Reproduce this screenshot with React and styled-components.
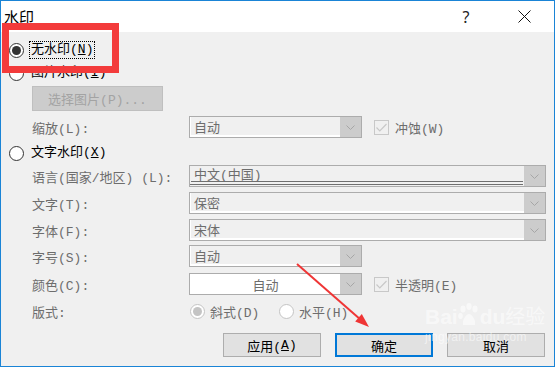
import React from "react";
import styled, { createGlobalStyle } from "styled-components";

const GlobalStyle = createGlobalStyle`
  html, body { margin: 0; padding: 0; background: #ffffff; }
  body { font-family: "Liberation Mono", "Noto Sans CJK SC", monospace; }
  * { box-sizing: border-box; }
`;

const Window = styled.div`
  position: relative;
  width: 555px;
  height: 367px;
  border: 1px solid #1a84d6;
  background: #f0f0f0;
  display: flex;
  flex-direction: column;
  overflow: hidden;
`;

const TitleBar = styled.div`
  height: 31px;
  flex: none;
  background: #ffffff;
  display: flex;
  align-items: center;
  padding: 0 23px 0 3px;
  font-family: "Noto Sans CJK SC", sans-serif;
  font-size: 15px;
  color: #000;
`;

const TitleText = styled.span`
  flex: 1;
  line-height: 1;
`;

const TitleGlyph = styled.span`
  width: 14px;
  display: flex;
  justify-content: center;
  font-family: "Noto Sans", sans-serif;
  font-size: 16px;
  color: #222;
  margin-left: ${(p) => p.$ml || 0}px;
`;

const Body = styled.div`
  flex: 1;
  display: flex;
  flex-direction: column;
  padding: 0 9px 0 8px;
  font-size: 13px;
`;

const RadioRow = styled.div`
  display: flex;
  align-items: center;
  height: 20px;
  margin-top: ${(p) => p.$mt}px;
`;

const Radio = styled.span`
  position: relative;
  flex: none;
  width: 15px;
  height: 15px;
  border-radius: 50%;
  border: 1px solid ${(p) => (p.$disabled ? "#c4c4c4" : "#333")};
  background: #fff;
  margin-left: ${(p) => p.$ml || 0}px;
  &::after {
    content: "";
    display: ${(p) => (p.$checked ? "block" : "none")};
    position: absolute;
    inset: 2px;
    border-radius: 50%;
    background: ${(p) => (p.$disabled ? "#c4c4c4" : "#333")};
  }
`;

const RadioLabel = styled.span`
  margin-left: 5px;
  padding: 0 1px;
  height: 18px;
  line-height: 16px;
  border: 1px dotted ${(p) => (p.$focused ? "#000" : "transparent")};
  color: ${(p) => (p.$muted ? "#6d6d6d" : "#000")};
  white-space: nowrap;
`;

const Key = styled.span`
  text-decoration: underline;
`;

const PictureButton = styled.div`
  margin: 3px 0 0 23px;
  width: 131px;
  height: 25px;
  background: #cccccc;
  border: 1px solid #bfbfbf;
  color: #a3a3a3;
  display: flex;
  align-items: center;
  justify-content: center;
  white-space: nowrap;
`;

const FieldRow = styled.div`
  display: grid;
  grid-template-columns: 157px auto auto;
  justify-content: start;
  align-items: center;
  height: ${(p) => p.$h || 22}px;
  margin-top: ${(p) => p.$mt}px;
  padding-left: 23px;
`;

const Label = styled.span`
  color: #6d6d6d;
  white-space: nowrap;
`;

const Combo = styled.div`
  width: ${(p) => p.$w}px;
  height: 22px;
  border: 1px solid #acacac;
  display: flex;
  background: ${(p) => (p.$white ? "#ffffff" : "#f0f0f0")};
`;

const ComboText = styled.div`
  flex: 1;
  display: flex;
  align-items: center;
  justify-content: ${(p) => (p.$center ? "center" : "flex-start")};
  padding-left: ${(p) => (p.$center ? 0 : 3)}px;
  color: #6d6d6d;
  white-space: nowrap;
  border-left: 1px solid ${(p) => (p.$underline || p.$white ? "transparent" : "#fff")};
  border-bottom: ${(p) =>
    p.$underline
      ? "4px double #6f6f6f"
      : p.$white
      ? "none"
      : "2px solid #fff"};
  margin-bottom: ${(p) => (p.$underline ? 1 : 0)}px;
  margin-right: ${(p) => (p.$underline ? 1 : 0)}px;
`;

const ComboArrow = styled.div`
  width: 21px;
  flex: none;
  background: #cccccc;
  display: flex;
  align-items: center;
  justify-content: center;
`;

const CheckItem = styled.div`
  display: flex;
  align-items: center;
  margin-left: 12px;
`;

const CheckBox = styled.span`
  width: 15px;
  height: 15px;
  border: 1px solid #c8c8c8;
  display: flex;
  align-items: center;
  justify-content: center;
`;

const CheckLabel = styled.span`
  margin-left: 6px;
  color: #6d6d6d;
  white-space: nowrap;
`;

const Options = styled.div`
  display: flex;
  align-items: center;
`;

const OptionLabel = styled.span`
  margin-left: 5px;
  color: #6d6d6d;
  white-space: nowrap;
  width: ${(p) => p.$w || "auto"};
`;

const ButtonRow = styled.div`
  display: flex;
  justify-content: flex-end;
  gap: 14px;
  margin-top: 12px;
`;

const Button = styled.div`
  width: 98px;
  height: 24px;
  background: #e1e1e1;
  border: ${(p) => (p.$default ? "2px solid #0078d7" : "1px solid #adadad")};
  display: flex;
  align-items: center;
  justify-content: center;
  color: #000;
  white-space: nowrap;
`;

const Highlight = styled.div`
  position: absolute;
  left: 1px;
  top: 22px;
  width: 117px;
  height: 50px;
  border: 7px solid #f33b3b;
  pointer-events: none;
`;

const Overlay = styled.svg`
  position: absolute;
  left: 0;
  top: 0;
  pointer-events: none;
`;

const Watermark = styled.div`
  position: absolute;
  left: 424px;
  top: 302px;
  display: flex;
  flex-direction: column;
  align-items: flex-start;
  color: rgba(255, 255, 255, 0.55);
  pointer-events: none;
  font-family: "Liberation Sans", "Noto Sans CJK SC", sans-serif;
`;

const WmBrand = styled.div`
  display: flex;
  align-items: flex-end;
  font-size: 21px;
  font-weight: bold;
  line-height: 1;
`;

const WmUrl = styled.div`
  font-size: 12px;
  margin-top: 3px;
  letter-spacing: 0.3px;
`;

const Chevron = () => (
  <svg width="9" height="5" viewBox="0 0 9 5">
    <polyline points="0.5,0.5 4.5,4.5 8.5,0.5" fill="none" stroke="#a6a6a6" strokeWidth="1" />
  </svg>
);

const Check = () => (
  <svg width="11" height="9" viewBox="0 0 11 9">
    <polyline points="0.5,4.5 3.8,7.8 10.5,1" fill="none" stroke="#c8c8c8" strokeWidth="1.2" />
  </svg>
);

const ComboBox = ({ w, text, underline, white, center }) => (
  <Combo $w={w} $white={white}>
    <ComboText $underline={underline} $white={white} $center={center}>
      {text}
    </ComboText>
    <ComboArrow>
      <Chevron />
    </ComboArrow>
  </Combo>
);

export default function App() {
  return (
    <>
      <GlobalStyle />
      <Window>
        <TitleBar>
          <TitleText>水印</TitleText>
          <TitleGlyph>?</TitleGlyph>
          <TitleGlyph $ml={44}>
            <svg width="13" height="13" viewBox="0 0 13 13">
              <path d="M0.5 0.5 L12.5 12.5 M12.5 0.5 L0.5 12.5" stroke="#111" strokeWidth="1" />
            </svg>
          </TitleGlyph>
        </TitleBar>
        <Body>
          <RadioRow $mt={8}>
            <Radio $checked />
            <RadioLabel $focused>
              无水印(<Key>N</Key>)
            </RadioLabel>
          </RadioRow>
          <RadioRow $mt={3}>
            <Radio />
            <RadioLabel>
              图片水印(<Key>I</Key>)
            </RadioLabel>
          </RadioRow>
          <PictureButton>选择图片(P)...</PictureButton>
          <FieldRow $mt={5}>
            <Label>缩放(L):</Label>
            <ComboBox w={173} text="自动" />
            <CheckItem>
              <CheckBox>
                <Check />
              </CheckBox>
              <CheckLabel>冲蚀(W)</CheckLabel>
            </CheckItem>
          </FieldRow>
          <RadioRow $mt={5}>
            <Radio />
            <RadioLabel>
              文字水印(<Key>X</Key>)
            </RadioLabel>
          </RadioRow>
          <FieldRow $mt={2}>
            <Label>语言(国家/地区) (L):</Label>
            <ComboBox w={357} text="中文(中国)" underline />
          </FieldRow>
          <FieldRow $mt={5}>
            <Label>文字(T):</Label>
            <ComboBox w={357} text="保密" />
          </FieldRow>
          <FieldRow $mt={5}>
            <Label>字体(F):</Label>
            <ComboBox w={357} text="宋体" />
          </FieldRow>
          <FieldRow $mt={4}>
            <Label>字号(S):</Label>
            <ComboBox w={173} text="自动" />
          </FieldRow>
          <FieldRow $mt={6}>
            <Label>颜色(C):</Label>
            <ComboBox w={173} text="自动" white center />
            <CheckItem>
              <CheckBox>
                <Check />
              </CheckBox>
              <CheckLabel>半透明(E)</CheckLabel>
            </CheckItem>
          </FieldRow>
          <FieldRow $mt={6} $h={20}>
            <Label>版式:</Label>
            <Options>
              <Radio $checked $disabled $ml={1} />
              <OptionLabel $w="69px">斜式(D)</OptionLabel>
              <Radio $disabled />
              <OptionLabel>水平(H)</OptionLabel>
            </Options>
          </FieldRow>
          <ButtonRow>
            <Button>
              应用(<Key>A</Key>)
            </Button>
            <Button $default>确定</Button>
            <Button>取消</Button>
          </ButtonRow>
        </Body>
        <Highlight />
        <Watermark>
          <WmBrand>
            <span>Bai</span>
            <svg width="22" height="24" viewBox="0 0 22 24">
              <g fill="rgba(255,255,255,0.55)">
                <ellipse cx="5" cy="6" rx="2.6" ry="3.4" />
                <ellipse cx="11" cy="3.5" rx="2.6" ry="3.4" />
                <ellipse cx="17" cy="6" rx="2.6" ry="3.4" />
                <ellipse cx="2.5" cy="13" rx="2.3" ry="3" />
                <path d="M5 22 C4 17 8 11 11 11 C14 11 18 17 17 22 Z" />
              </g>
            </svg>
            <span>du</span>
            <span style={{ fontWeight: "normal", fontSize: "20px" }}>经验</span>
          </WmBrand>
          <WmUrl>jingyan.baidu.com</WmUrl>
        </Watermark>
        <Overlay width="553" height="365" viewBox="1 1 553 365">
          <line x1="297" y1="264" x2="361" y2="320" stroke="#ef3535" strokeWidth="2" />
          <polygon points="369,327 355.2,321.6 361.8,314" fill="#ef3535" />
        </Overlay>
      </Window>
    </>
  );
}
